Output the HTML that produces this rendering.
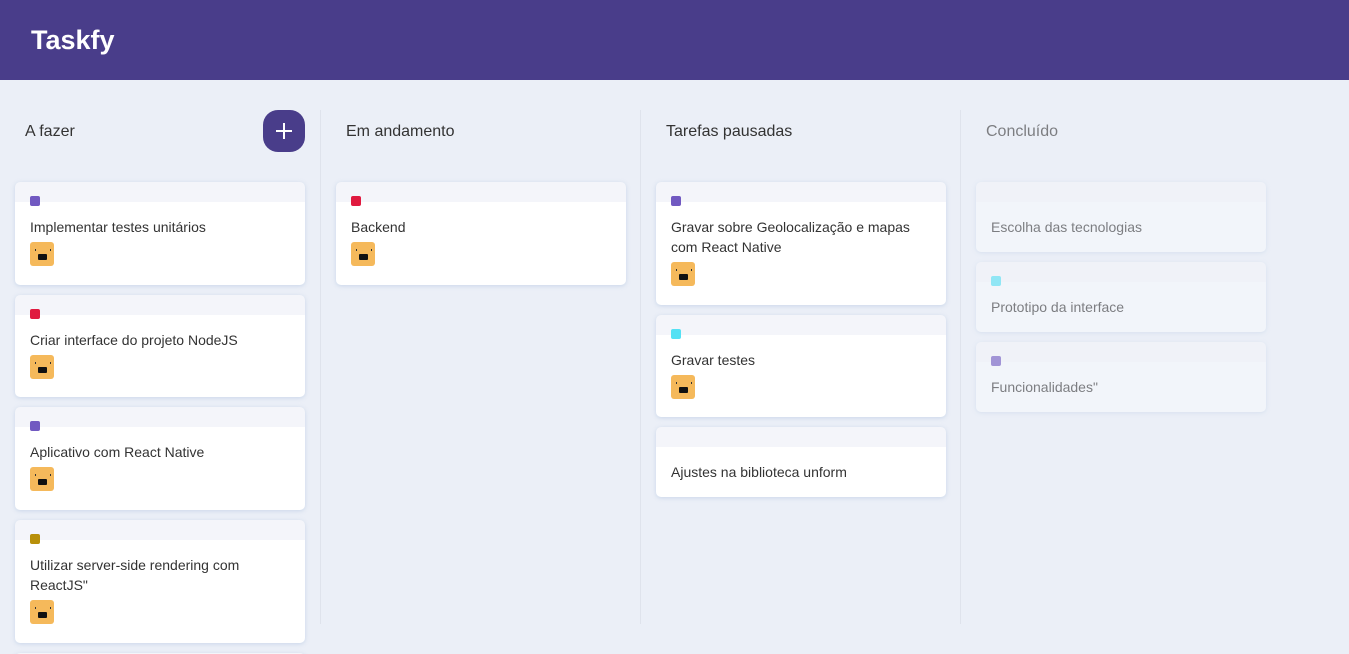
<!DOCTYPE html>
<html><head><meta charset="utf-8"><style>
*{box-sizing:border-box;margin:0;padding:0}
html,body{width:1349px;height:654px;overflow:hidden}
body{background:#ebeff7;font-family:"Liberation Sans",sans-serif;color:#333}
header{height:80px;background:#493d8a;padding-left:31px;display:flex;align-items:center}
header h1{color:#fff;font-size:27px;font-weight:bold}
.board{display:flex;padding-top:30px;height:574px;overflow:hidden}
.col{width:320px;padding:0 15px;border-right:1px solid #dfe3ec;height:514px;position:relative}
.col:first-child{width:321px}
.col:last-child{border-right:none}
.col.done{opacity:.6}
.title{display:flex;align-items:center;padding-left:10px;padding-top:2px;font-size:16px;color:#333;height:42px;margin-bottom:30px}
.add{position:absolute;left:263px;top:0;width:42px;height:42px;border-radius:15px;background:#493d8a;color:#fff;display:flex;align-items:center;justify-content:center}
.card{width:290px;background:#fff linear-gradient(#f4f5fa,#f4f5fa) no-repeat;background-size:100% 20px;border-radius:5px;box-shadow:0 1px 4px rgba(192,208,230,.8);padding:14px 15px 15px;margin-bottom:10px}
.done .card{background-color:#f7f9fd}
.lab{width:10px;height:10px;border-radius:2px;margin-bottom:11px}
.card p{font-size:14px;line-height:20px;color:#333}
.av{width:24px;height:24px;border-radius:3px;background:#f5b95b;margin-top:5px;margin-bottom:3.67px;position:relative}
.av:before{content:"";position:absolute;left:8px;top:12px;width:9px;height:6px;background:#111;border-radius:1px}
.av:after{content:"";position:absolute;left:5px;top:7px;width:14px;height:2px;border-left:1px solid #333;border-right:1px solid #333}
</style></head><body>
<header><h1>Taskfy</h1></header>
<div class="board">
<div class="col"><div class="title">A fazer</div><div class="add"><svg width="18" height="18"><path d="M9 1v16M1 9h16" stroke="#fff" stroke-width="2"/></svg></div>
<div class="card"><div class="lab" style="background:#7159c1"></div><p>Implementar testes unitários</p><div class="av"></div></div>
<div class="card"><div class="lab" style="background:#e01a3f"></div><p>Criar interface do projeto NodeJS</p><div class="av"></div></div>
<div class="card"><div class="lab" style="background:#7159c1"></div><p>Aplicativo com React Native</p><div class="av"></div></div>
<div class="card"><div class="lab" style="background:#b8900a"></div><p>Utilizar server-side rendering com ReactJS"</p><div class="av"></div></div>
<div class="card" style="height:20px;padding:0"></div>
</div>
<div class="col"><div class="title">Em andamento</div>
<div class="card"><div class="lab" style="background:#e01a3f"></div><p>Backend</p><div class="av"></div></div>
</div>
<div class="col"><div class="title">Tarefas pausadas</div>
<div class="card"><div class="lab" style="background:#7159c1"></div><p>Gravar sobre Geolocalização e mapas com React Native</p><div class="av"></div></div>
<div class="card"><div class="lab" style="background:#54e1f4"></div><p>Gravar testes</p><div class="av"></div></div>
<div class="card"><div class="lab"></div><p>Ajustes na biblioteca unform</p></div>
</div>
<div class="col done"><div class="title">Concluído</div>
<div class="card"><div class="lab"></div><p>Escolha das tecnologias</p></div>
<div class="card"><div class="lab" style="background:#54e1f4"></div><p>Prototipo da interface</p></div>
<div class="card"><div class="lab" style="background:#7159c1"></div><p>Funcionalidades"</p></div>
</div>
</div>
</body></html>
